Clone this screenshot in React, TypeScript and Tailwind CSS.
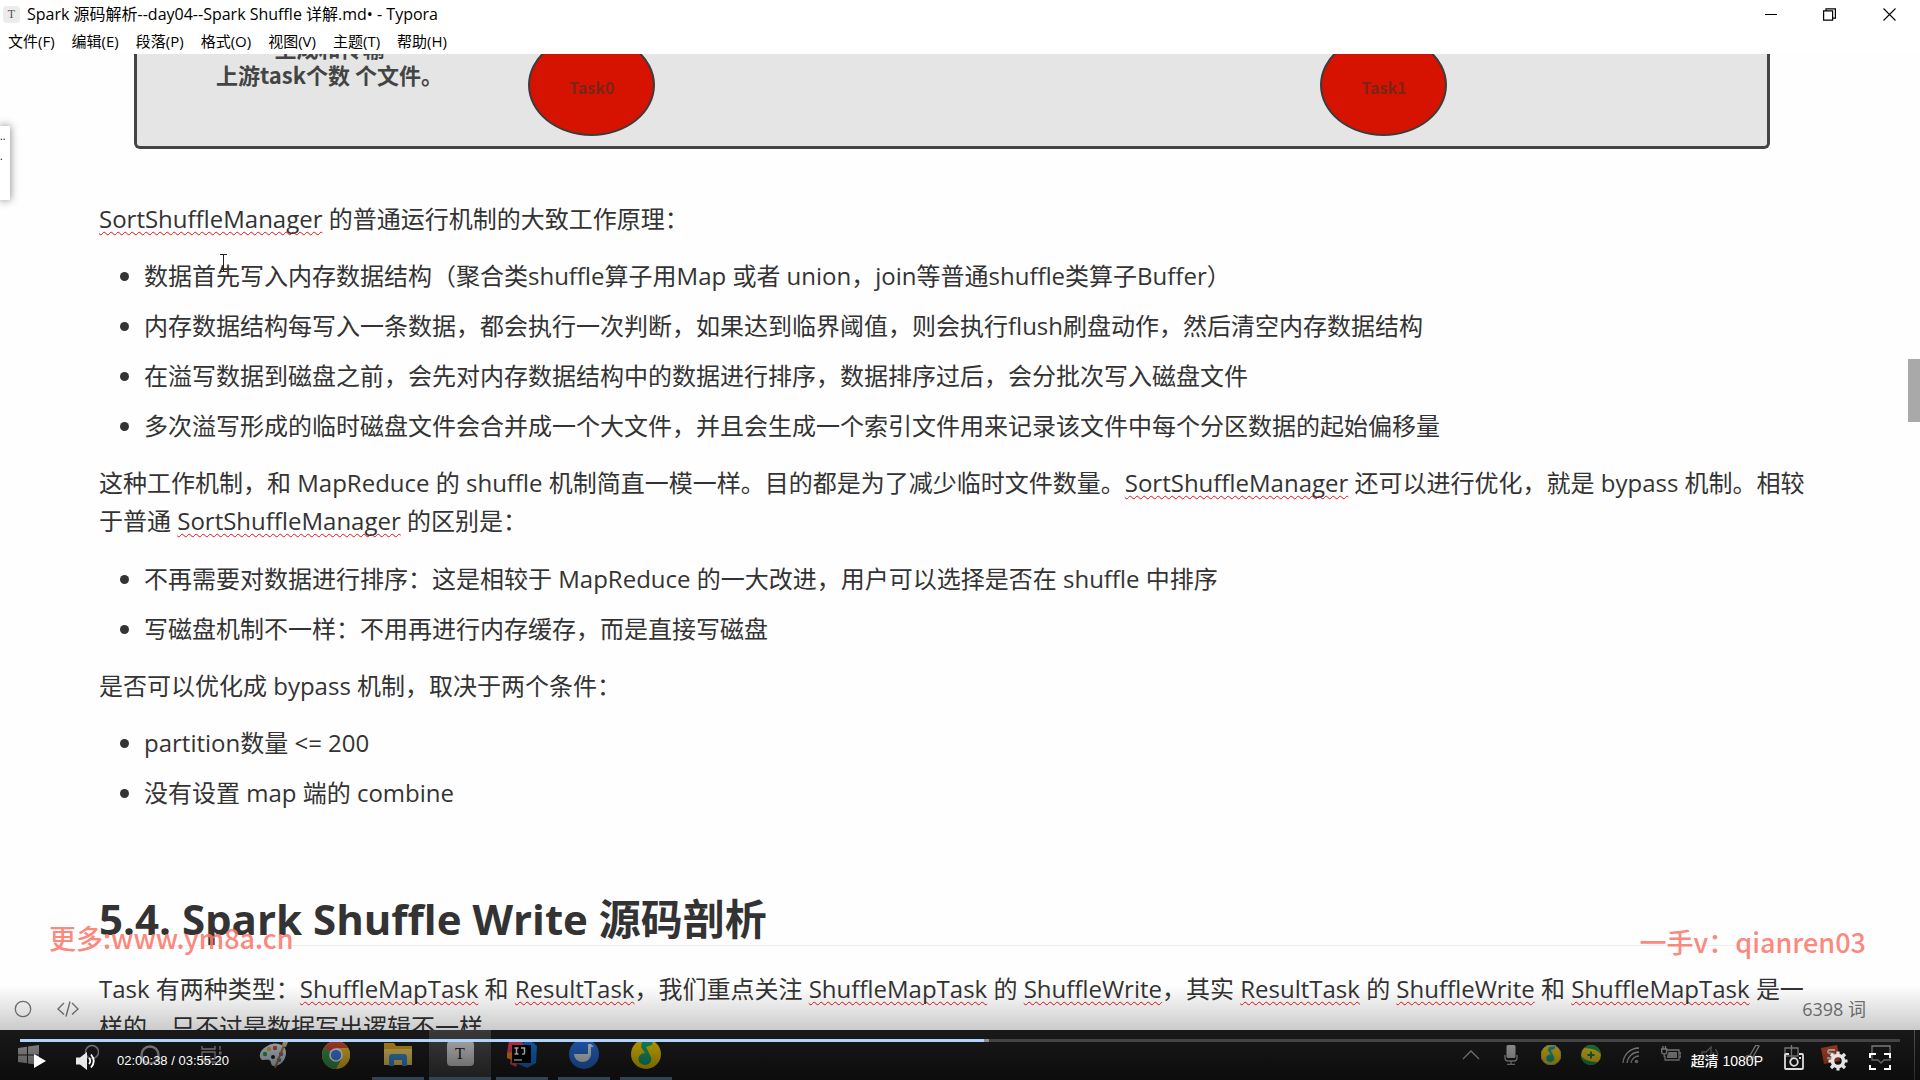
import React from 'react';

const menus = ['文件(F)', '编辑(E)', '段落(P)', '格式(O)', '视图(V)', '主题(T)', '帮助(H)'];

const writeSteps = [
  '数据首先写入内存数据结构（聚合类shuffle算子用Map 或者 union，join等普通shuffle类算子Buffer）',
  '内存数据结构每写入一条数据，都会执行一次判断，如果达到临界阈值，则会执行flush刷盘动作，然后清空内存数据结构',
  '在溢写数据到磁盘之前，会先对内存数据结构中的数据进行排序，数据排序过后，会分批次写入磁盘文件',
  '多次溢写形成的临时磁盘文件会合并成一个大文件，并且会生成一个索引文件用来记录该文件中每个分区数据的起始偏移量',
];

const bypassDiffs = [
  '不再需要对数据进行排序：这是相较于 MapReduce 的一大改进，用户可以选择是否在 shuffle 中排序',
  '写磁盘机制不一样：不用再进行内存缓存，而是直接写磁盘',
];

const bypassConditions = ['partition数量 <= 200', '没有设置 map 端的 combine'];

function Misspelled({ children }: { children: React.ReactNode }) {
  return (
    <span className="underline decoration-[#e8101a] decoration-wavy decoration-[1px] underline-offset-3 [text-decoration-skip-ink:none]">
      {children}
    </span>
  );
}

function BulletList({ items }: { items: string[] }) {
  return (
    <ul className="my-[19px] flex flex-col gap-3 pl-[45px]">
      {items.map((item) => (
        <li key={item} className="relative">
          <span className="absolute -left-6 top-[15px] size-[9px] rounded-full bg-[#333]" />
          {item}
        </li>
      ))}
    </ul>
  );
}

function TitleBar() {
  return (
    <header className="shrink-0 bg-white text-black">
      <div className="flex h-7 items-center pl-[3px]">
        <span className="flex size-[17px] items-center justify-center rounded-sm bg-[#ececec] font-['Liberation_Serif',serif] text-xs text-[#555]">
          T
        </span>
        <h1 className="ml-[7px] flex-1 text-base">Spark 源码解析--day04--Spark Shuffle 详解.md• - Typora</h1>
        <div className="flex">
          <button type="button" aria-label="Minimize" className="flex h-7 w-[58px] items-center justify-center">
            <svg width="13" height="13" viewBox="0 0 13 13" stroke="#000" fill="none">
              <path d="M0 6.5h12" />
            </svg>
          </button>
          <button type="button" aria-label="Restore" className="flex h-7 w-[58px] items-center justify-center">
            <svg width="13" height="13" viewBox="0 0 13 13" stroke="#000" strokeWidth="1.2" fill="none">
              <path d="M0.6 2.8h9v9.4h-9zM3 2.8V0.8h9.4v9.4H9.6" />
            </svg>
          </button>
          <button type="button" aria-label="Close" className="flex h-7 w-[62px] items-center justify-center">
            <svg width="13" height="13" viewBox="0 0 13 13" stroke="#000" strokeWidth="1.1" fill="none">
              <path d="M0.5 0.5l12 12M12.5 0.5l-12 12" />
            </svg>
          </button>
        </div>
      </div>
      <nav className="flex h-[26px] items-center gap-[17px] pl-2 text-[15px] leading-[22px]">
        {menus.map((menu) => (
          <button key={menu} type="button">
            {menu}
          </button>
        ))}
      </nav>
    </header>
  );
}

function Diagram() {
  return (
    <div className="relative mr-[51px] ml-[35px] h-[95px] rounded-b-md border-x-3 border-b-3 border-[#444] bg-[#e5e5e5] font-['Noto_Sans_CJK_SC',sans-serif] font-bold">
      <p className="absolute -top-[20px] left-[79px] text-center text-[22px] leading-[27px] text-[#444]">
        生成和传输
        <br />
        上游task个数 个文件。
      </p>
      <span className="absolute -top-[20px] left-[24%] flex h-[102px] w-[127px] items-center justify-center rounded-[50%] border-2 border-[#3c3c3c] bg-[#d51300] pt-1 text-base text-[#7d2318]">
        Task0
      </span>
      <span className="absolute -top-[20px] left-[72.6%] flex h-[102px] w-[127px] items-center justify-center rounded-[50%] border-2 border-[#3c3c3c] bg-[#d51300] pt-1 text-base text-[#7d2318]">
        Task1
      </span>
    </div>
  );
}

function Editor() {
  return (
    <main className="relative min-h-0 flex-1 overflow-hidden">
      <article className="px-[99px] text-2xl leading-[38px] text-[#333]">
        <Diagram />
        <p className="mt-[51px]">
          <Misspelled>SortShuffleManager</Misspelled> 的普通运行机制的大致工作原理：
        </p>
        <BulletList items={writeSteps} />
        <p className="pb-px">
          这种工作机制，和 MapReduce 的 shuffle 机制简直一模一样。目的都是为了减少临时文件数量。
          <Misspelled>SortShuffleManager</Misspelled> 还可以进行优化，就是 bypass 机制。相较于普通{' '}
          <Misspelled>SortShuffleManager</Misspelled> 的区别是：
        </p>
        <BulletList items={bypassDiffs} />
        <p>是否可以优化成 bypass 机制，取决于两个条件：</p>
        <BulletList items={bypassConditions} />
        <h2 className="mt-20 border-b border-[#eee] text-[42px] leading-[53px] font-bold">
          5.4. Spark Shuffle Write 源码剖析
        </h2>
        <p className="mt-6">
          Task 有两种类型：<Misspelled>ShuffleMapTask</Misspelled> 和 <Misspelled>ResultTask</Misspelled>
          ，我们重点关注 <Misspelled>ShuffleMapTask</Misspelled> 的 <Misspelled>ShuffleWrite</Misspelled>
          ，其实 <Misspelled>ResultTask</Misspelled> 的 <Misspelled>ShuffleWrite</Misspelled> 和{' '}
          <Misspelled>ShuffleMapTask</Misspelled> 是一样的，只不过是数据写出逻辑不一样
        </p>
      </article>

      {/* collapsed side panel */}
      <aside className="absolute top-[72px] left-0 h-[74px] w-[10px] overflow-hidden bg-white text-[10px] leading-5 text-black shadow-[0_0_8px_rgba(0,0,0,0.5)]">
        <p>..</p>
        <p>.</p>
      </aside>

      <div className="absolute top-[305px] right-0 h-[63px] w-3 bg-[#a9a9a9]" />

      {/* text cursor */}
      <svg className="absolute top-[200px] left-[219px]" width="9" height="18" viewBox="0 0 9 18" stroke="#222" fill="none">
        <path d="M1 0.5h7M4.5 0.5v17M1 17.5h7" />
      </svg>

      <footer className="absolute inset-x-0 bottom-0 flex h-[42px] items-center pr-[54px] pl-[14px] text-lg text-[#777]">
        <button type="button" aria-label="Outline">
          <svg width="18" height="18" viewBox="0 0 18 18" fill="none" stroke="#777" strokeWidth="1.3">
            <circle cx="9" cy="9" r="7.7" />
          </svg>
        </button>
        <button type="button" aria-label="Source code mode" className="ml-[25px]">
          <svg width="22" height="18" viewBox="0 0 22 18" fill="none" stroke="#777" strokeWidth="1.4">
            <path d="M7 3L1 9l6 5.5M15 3l6 6-6 5.5M13 1.5L9 16.5" />
          </svg>
        </button>
        <span className="ml-auto">6398 词</span>
      </footer>
    </main>
  );
}

function MusicIcon({ size }: { size: number }) {
  return (
    <svg width={size} height={size} viewBox="0 0 30 30">
      <circle cx="15" cy="15" r="15" fill="#f5cf00" />
      <path d="M11 3l11-2-1 5-6 2 5 10a6.5 6 0 1 1-6-4L10 8z" fill="#1aa87a" />
    </svg>
  );
}

const apps = [
  {
    name: 'Start',
    state: 'start',
    icon: (
      <svg width="21" height="20" viewBox="0 0 21 20" fill="#b5b5b5">
        <path d="M0 3l9-1.3V9.5H0zM10 1.5L21 0v9.5H10zM0 10.5h9v7.8L0 17zM10 10.5h11V20l-11-1.5z" />
      </svg>
    ),
  },
  {
    name: 'Search',
    state: 'idle',
    icon: (
      <svg width="22" height="22" viewBox="0 0 22 22" fill="none" stroke="#aaa" strokeWidth="1.5">
        <circle cx="15" cy="8" r="6.5" />
        <path d="M10.5 13L3 20.5" />
      </svg>
    ),
  },
  {
    name: 'Cortana',
    state: 'idle',
    icon: (
      <svg width="20" height="20" viewBox="0 0 20 20" fill="none" stroke="#aaa" strokeWidth="2.5">
        <circle cx="10" cy="10" r="8.5" />
      </svg>
    ),
  },
  {
    name: 'Task view',
    state: 'idle',
    icon: (
      <svg width="22" height="20" viewBox="0 0 22 20" fill="none" stroke="#aaa" strokeWidth="1.3">
        <path d="M1 1v3h13V1M1 7h13v7H1zM1 20v-3h13v3M19 1v4M19 11v9" />
        <path d="M18 8h2.5" strokeWidth="3" />
      </svg>
    ),
  },
  {
    name: 'Paint',
    state: 'idle',
    icon: (
      <svg width="30" height="28" viewBox="0 0 30 28">
        <path d="M10 4c8-4 18 0 17 9-1 8-7 12-12 12-4 0-2-5-5-6s-8 2-9-3S4 7 10 4z" fill="#cfe0ea" />
        <circle cx="6" cy="13" r="2.2" fill="#3b9c4a" />
        <circle cx="10" cy="8" r="2.2" fill="#d8b43a" />
        <circle cx="16" cy="7" r="2.2" fill="#c8503e" />
        <circle cx="22" cy="13" r="2.2" fill="#8b59a8" />
        <circle cx="20" cy="19" r="2.2" fill="#3e7fc0" />
        <circle cx="14" cy="16" r="2" fill="#222" />
        <path d="M25 4L16 27" stroke="#b5702c" strokeWidth="2" />
        <path d="M23 5l1-5 5 1-2 5z" fill="#d9bd91" />
      </svg>
    ),
  },
  {
    name: 'Chrome',
    state: 'idle',
    icon: (
      <svg width="28" height="28" viewBox="0 0 28 28">
        <circle cx="14" cy="14" r="14" fill="#f2c230" />
        <path d="M14 14L1.9 7A14 14 0 0 1 26.1 7z" fill="#d8473a" />
        <path d="M14 14L1.9 7A14 14 0 0 0 14 28l6-10.5z" fill="#3a9b50" />
        <path d="M14 7h12.1a14 14 0 0 1 0 14L14 28l6-10.5z" fill="#f2c230" />
        <circle cx="14" cy="14" r="6.8" fill="#fff" />
        <circle cx="14" cy="14" r="5.2" fill="#4285f4" />
      </svg>
    ),
  },
  {
    name: 'File Explorer',
    state: 'open',
    icon: (
      <svg width="28" height="24" viewBox="0 0 28 24">
        <path d="M0 1h10l2 3h16v19H0z" fill="#e2a91c" />
        <path d="M0 7h28v16H0z" fill="#fbd667" />
        <path d="M5 24V15q0-3 3-3h12q3 0 3 3v9h-5v-6h-8v6z" fill="#3b93d8" />
      </svg>
    ),
  },
  {
    name: 'Typora',
    state: 'active',
    icon: (
      <span className="flex h-[25px] w-[27px] items-center justify-center rounded bg-[#ddd] font-['Liberation_Serif',serif] text-base text-[#222]">
        T
      </span>
    ),
  },
  {
    name: 'IntelliJ IDEA',
    state: 'open',
    icon: (
      <svg width="30" height="28" viewBox="0 0 30 28">
        <path d="M2 1l12-1 4 6-9 21-6-3 1-7-4-4z" fill="#f0435d" />
        <path d="M0 13l5-1v8l-5-2z" fill="#f78b2d" />
        <path d="M17 1l6-1 7 6-1 17-9 5-9-4z" fill="#1476dc" />
        <path d="M5 5h19v18H5z" fill="#000" />
        <path d="M7.5 8h4M9.5 8v6M7.5 14h4M14 8h3.5v5q0 1.5-2.5 1" fill="none" stroke="#fff" strokeWidth="1.5" />
        <path d="M7 20h8" stroke="#fff" strokeWidth="1.3" />
      </svg>
    ),
  },
  {
    name: 'Bird',
    state: 'open',
    icon: (
      <svg width="30" height="30" viewBox="0 0 30 30">
        <circle cx="15" cy="15" r="15" fill="#2a72e0" />
        <path d="M5 15h14V5h3l3 3h-3v7a8.500 8 0 0 1-17 0z" fill="#dfe8ea" />
      </svg>
    ),
  },
  { name: 'QQ Music', state: 'open', icon: <MusicIcon size={30} /> },
];

const appStyles: Record<string, string> = {
  start: 'w-[57px]',
  idle: 'mx-[5px] w-[52px]',
  open: 'mx-[5px] w-[52px] border-b-3 border-[#76a5d0]',
  active: 'w-[62px] border-b-3 border-[#76a5d0] bg-[#484848]',
};

const tray = [
  {
    name: 'Show hidden icons',
    icon: <path d="M2 14l8-8 8 8" />,
  },
  {
    name: 'Microphone',
    icon: (
      <>
        <rect x="5.5" y="0" width="9" height="13" rx="1.5" fill="#c8c8c8" stroke="none" />
        <path d="M4 10v3q0 3 3 3h6q3 0 3-3v-3M10 16v4M6 19.5h8" />
      </>
    ),
  },
  { name: 'QQ Music', icon: <MusicIcon size={20} /> },
  {
    name: '360',
    icon: (
      <>
        <circle cx="10" cy="10" r="10" fill="#f0cf1e" stroke="none" />
        <path d="M3 3q3-3 7-3 8 0 10 9-5-6-17-6zM17 17q-3 3-7 3-8 0-10-9 5 6 17 6z" fill="#1c9b4c" stroke="none" />
        <path d="M10 6.5v7M6.5 10h7" stroke="#158040" strokeWidth="2" />
      </>
    ),
  },
  {
    name: 'Network',
    icon: (
      <>
        <path d="M2 18A16 16 0 0 1 18 3M6 18A12 12 0 0 1 18 7M10 18a8 8 0 0 1 8-7" />
        <circle cx="15.5" cy="16.5" r="1.8" fill="#aaa" stroke="none" />
      </>
    ),
  },
  {
    name: 'Battery',
    icon: (
      <>
        <path d="M6 5h12v10H4v-4M18 8h2v4h-2M0.7 4h5v3q0 2-2.5 2T0.7 7zM2 4V1M4.5 4V1M3.2 9v3" />
        <path d="M7.5 7H16v6H6v-2z" fill="#aaa" stroke="none" />
      </>
    ),
  },
  {
    name: 'Volume',
    icon: <path d="M1 7h4l5-5v15l-5-5H1zM12 7q2 3 0 6M14.5 4q4 6 0 11" opacity="0.6" />,
  },
  {
    name: 'Pen',
    icon: <path d="M8 12L15 0l3 1-6 11q-5 6-7 1 0-4 5-2t3 3q2-4 5-1" />,
  },
  {
    name: 'Input method',
    icon: <path d="M4 3h13v8H4zM10.5 0v15" />,
  },
  {
    name: 'Sogou',
    icon: (
      <>
        <path d="M0 3l16-3 3 16-16 3z" fill="#d9502c" stroke="none" />
        <path d="M14 5H8q-2 2 0 3l5 1q1 3-1 4H6" stroke="#eee" strokeWidth="2" />
      </>
    ),
  },
];

function Taskbar() {
  return (
    <div className="flex h-[50px] shrink-0 bg-[#1f1f1f]">
      {apps.map((app) => (
        <button
          key={app.name}
          type="button"
          aria-label={app.name}
          className={`flex shrink-0 items-center justify-center ${appStyles[app.state]}`}
        >
          {app.icon}
        </button>
      ))}
      <div className="ml-auto flex items-center pr-[5px]">
        {tray.map((item) => (
          <button key={item.name} type="button" aria-label={item.name} className="flex w-10 justify-center">
            <svg width="20" height="20" viewBox="0 0 20 20" fill="none" stroke="#b5b5b5" strokeWidth="1.3">
              {item.icon}
            </svg>
          </button>
        ))}
        <button
          type="button"
          aria-label="Notifications"
          className="flex h-full w-16 items-center justify-center border-r border-[#666] pr-1"
        >
          <svg width="20" height="20" viewBox="0 0 20 20" fill="none" stroke="#b5b5b5" strokeWidth="1.3">
            <path d="M1 1h18v14h-6l-3 3-3-3H1z" />
          </svg>
        </button>
      </div>
    </div>
  );
}

function PlayerControls() {
  return (
    <div className="absolute inset-x-0 bottom-0 flex h-[105px] flex-col justify-end bg-linear-to-b from-transparent from-10% via-black/20 via-52% to-black/60 font-['Liberation_Sans','Noto_Sans_CJK_SC',sans-serif]">
      <div className="mx-5 flex h-[3px] bg-white/20">
        <div className="w-[51.3%] bg-[#b0d2fb]" />
        <div className="w-[5px] bg-white/40" />
      </div>
      <div className="flex h-[38px] items-center pr-[29px] pl-[34px] text-[13px] text-white">
        <button type="button" aria-label="Play">
          <svg width="12" height="14" viewBox="0 0 12 14" fill="#fff">
            <path d="M0 0l12 7-12 7z" />
          </svg>
        </button>
        <button type="button" aria-label="Mute" className="ml-[30px]">
          <svg width="20" height="18" viewBox="0 0 20 18" fill="none" stroke="#fff" strokeWidth="1.8">
            <path d="M0 5.5h4L11 0v18l-7-5.5H0z" fill="#e8e8e8" stroke="none" />
            <path d="M13 6q2.5 3 0 6M15 2.5q5.5 6.5 0 13" />
          </svg>
        </button>
        <span className="ml-[21px]">02:00:38 / 03:55:20</span>
        <button type="button" className="ml-auto text-sm font-medium">
          超清 1080P
        </button>
        <button type="button" aria-label="Screenshot" className="ml-[21px]">
          <svg width="20" height="18" viewBox="0 0 20 18" fill="none" stroke="#ddd" strokeWidth="1.8">
            <path d="M5 2H2q-1 0-1 1v13q0 1 1 1h16q1 0 1-1V3q0-1-1-1h-3" />
            <circle cx="10" cy="10" r="3.8" />
            <path d="M15 6h2" />
          </svg>
        </button>
        <button type="button" aria-label="Settings" className="ml-6">
          <svg width="20" height="20" viewBox="0 0 20 20" fill="none" stroke="#e4e4e4">
            <circle cx="10" cy="10" r="5.5" strokeWidth="3.6" />
            <path d="M10 0.5v4M10 15.5v4M0.5 10h4M15.5 10h4M3 3l3 3M14 14l3 3M17 3l-3 3M6 14l-3 3" strokeWidth="3.2" />
          </svg>
        </button>
        <button type="button" aria-label="Full screen" className="ml-[21px]">
          <svg width="22" height="17" viewBox="0 0 22 17" fill="none" stroke="#fff" strokeWidth="2">
            <path d="M1 5V1h6M15 1h6v4M1 12v4h6M15 16h6v-4" />
          </svg>
        </button>
      </div>
    </div>
  );
}

export default function App() {
  return (
    <div className="relative flex h-screen flex-col overflow-hidden bg-[#fefefe] font-['Open_Sans','Noto_Sans_CJK_SC',sans-serif]">
      <TitleBar />
      <Editor />
      <Taskbar />
      <PlayerControls />
      <div className="absolute inset-x-0 bottom-[122px] flex items-end justify-between pr-[54px] pl-[49px] font-['Noto_Sans_CJK_SC',sans-serif] text-[27px] leading-8 font-medium text-[#fd786c]/90">
        <span className="mb-1">更多:www.ym8a.cn</span>
        <span>一手v：qianren03</span>
      </div>
    </div>
  );
}
